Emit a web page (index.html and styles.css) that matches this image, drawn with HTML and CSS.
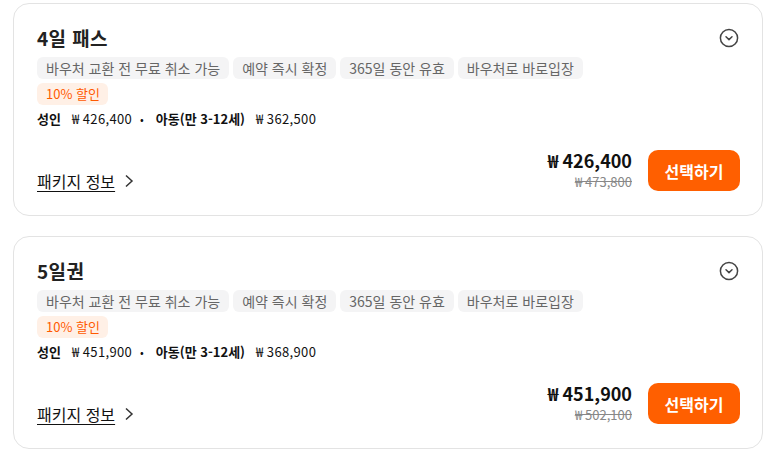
FILE: index.html
```html
<!DOCTYPE html>
<html lang="ko">
<head>
<meta charset="utf-8">
<link rel="stylesheet" href="styles.css">
</head>
<body>
<div class="list">
  <div class="card">
    <div class="head">
      <h2 class="title">4일 패스</h2>
      <svg class="toggle" width="20" height="20" viewBox="0 0 20 20"><circle cx="10" cy="10" r="8.6" fill="none" stroke="#444" stroke-width="1.5"/><path d="M7 8.8 L10 11.6 L13 8.8" fill="none" stroke="#444" stroke-width="1.5" stroke-linecap="round" stroke-linejoin="round"/></svg>
    </div>
    <div class="tags">
      <span class="tag">바우처 교환 전 무료 취소 가능</span>
      <span class="tag">예약 즉시 확정</span>
      <span class="tag">365일 동안 유효</span>
      <span class="tag">바우처로 바로입장</span>
    </div>
    <div class="tags"><span class="tag sale">10% 할인</span></div>
    <div class="rates">
      <b>성인</b><span class="amt">₩ 426,400</span><span class="dot">•</span><b>아동(만 3-12세)</b><span class="amt">₩ 362,500</span>
    </div>
    <div class="foot">
      <a class="info">패키지 정보<svg width="10" height="14" viewBox="0 0 10 14"><path d="M2 1.5 L8 7 L2 12.5" fill="none" stroke="#333" stroke-width="1.5"/></svg></a>
      <div class="buy">
        <div class="prices">
          <div class="now">₩ 426,400</div>
          <div class="was">₩ 473,800</div>
        </div>
        <button class="btn">선택하기</button>
      </div>
    </div>
  </div>
  <div class="card">
    <div class="head">
      <h2 class="title">5일권</h2>
      <svg class="toggle" width="20" height="20" viewBox="0 0 20 20"><circle cx="10" cy="10" r="8.6" fill="none" stroke="#444" stroke-width="1.5"/><path d="M7 8.8 L10 11.6 L13 8.8" fill="none" stroke="#444" stroke-width="1.5" stroke-linecap="round" stroke-linejoin="round"/></svg>
    </div>
    <div class="tags">
      <span class="tag">바우처 교환 전 무료 취소 가능</span>
      <span class="tag">예약 즉시 확정</span>
      <span class="tag">365일 동안 유효</span>
      <span class="tag">바우처로 바로입장</span>
    </div>
    <div class="tags"><span class="tag sale">10% 할인</span></div>
    <div class="rates">
      <b>성인</b><span class="amt">₩ 451,900</span><span class="dot">•</span><b>아동(만 3-12세)</b><span class="amt">₩ 368,900</span>
    </div>
    <div class="foot">
      <a class="info">패키지 정보<svg width="10" height="14" viewBox="0 0 10 14"><path d="M2 1.5 L8 7 L2 12.5" fill="none" stroke="#333" stroke-width="1.5"/></svg></a>
      <div class="buy">
        <div class="prices">
          <div class="now">₩ 451,900</div>
          <div class="was">₩ 502,100</div>
        </div>
        <button class="btn">선택하기</button>
      </div>
    </div>
  </div>
</div>
</body>
</html>
```
FILE: styles.css
```css
* { box-sizing: border-box; }
html, body { margin: 0; background: #fff; }
body {
  font-family: "Noto Sans CJK KR", "Noto Sans", sans-serif;
  color: #111;
}
.list {
  padding: 3px 8px 0 13px;
  display: flex;
  flex-direction: column;
  gap: 20px;
}
.card {
  border: 1px solid #e3e3e3;
  border-radius: 16px;
  padding: 24px 22px 24px 23px;
  display: flex;
  flex-direction: column;
}
.head {
  display: flex;
  justify-content: space-between;
  align-items: center;
  height: 20px;
}
.title {
  margin: 0;
  font-size: 19px;
  line-height: 20px;
  letter-spacing: 0.4px;
  font-weight: 700;
  color: #222;
}
.toggle { display: block; margin-right: 1px; }
.tags {
  display: flex;
  gap: 4px;
  margin-top: 4px;
}
.head + .tags { margin-top: 9px; }
.tag {
  display: inline-block;
  height: 22px;
  line-height: 22px;
  padding: 0 9px;
  font-size: 14px;
  color: #666;
  background: #f4f4f5;
  border-radius: 6px;
}
.tag.sale {
  font-size: 13px;
  padding: 0 8px 0 9px;
  color: #ff5a00;
  background: #fff0e6;
}
.rates {
  margin-top: 4px;
  font-size: 13px;
  line-height: 20px;
  display: flex;
  align-items: center;
}
.rates b { font-weight: 700; color: #111; }
.rates .amt { font-size: 13px; margin-left: 11px; color: #111; letter-spacing: 0.35px; }
.rates .dot { margin: 0 12px 0 8px; font-size: 11px; }
.foot {
  margin-top: 21px;
  display: flex;
  justify-content: space-between;
  align-items: flex-end;
}
.info {
  font-size: 16px;
  line-height: 20px;
  color: #111;
  text-decoration: underline;
  text-underline-offset: 3px;
  display: flex;
  align-items: center;
  gap: 9px;
}
.info svg { display: block; }
.buy {
  display: flex;
  align-items: center;
  gap: 16px;
}
.prices { text-align: right; }
.now {
  font-size: 18px;
  line-height: 20px;
  font-weight: 700;
  color: #111;
}
.was {
  margin-top: 3px;
  font-size: 13px;
  line-height: 18px;
  color: #888;
  text-decoration: line-through;
}
.btn {
  width: 92px;
  height: 41px;
  border: none;
  border-radius: 10px;
  background: #ff5f00;
  color: #fff;
  font-family: inherit;
  font-size: 16px;
  font-weight: 700;
  padding: 0;
}
```
